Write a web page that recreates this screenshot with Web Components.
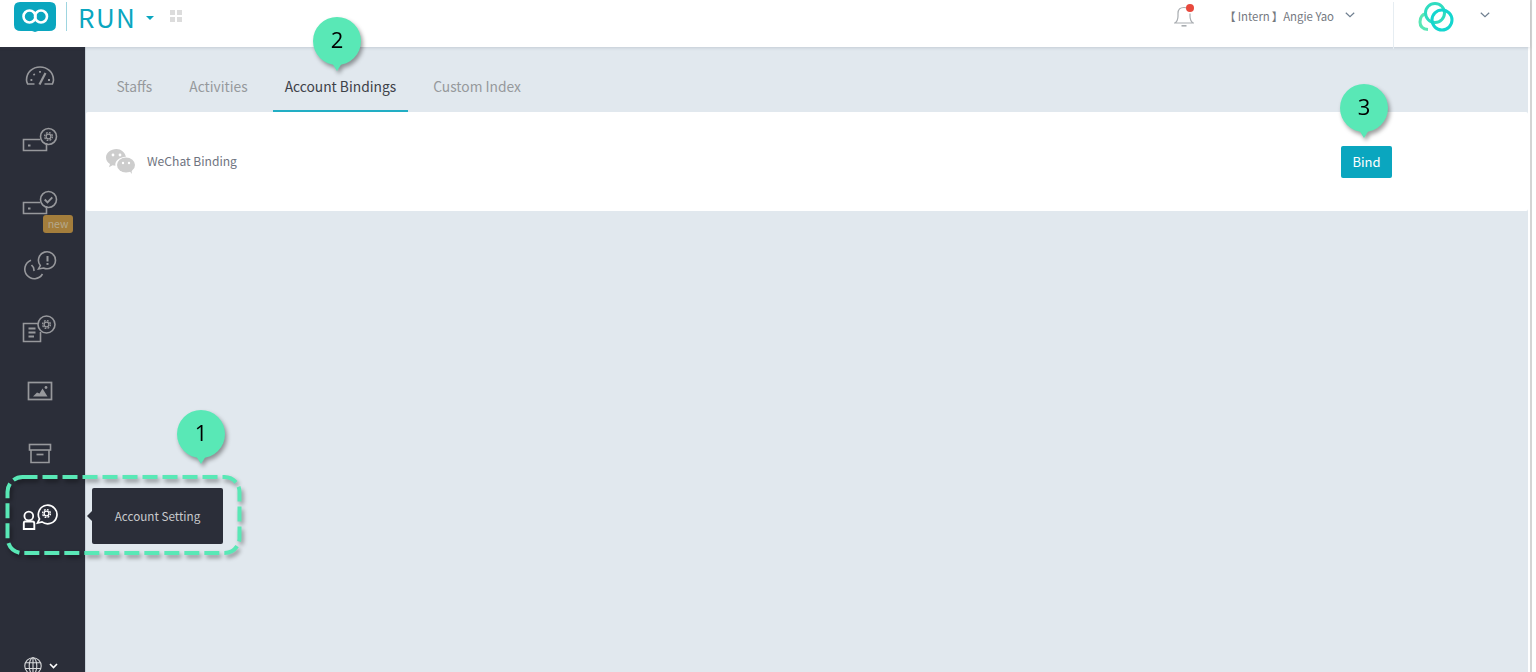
<!DOCTYPE html>
<html lang="en">
<head>
<meta charset="utf-8">
<title>Account Bindings</title>
<style>
  html, body { margin: 0; height: 100%; overflow: hidden; background: #fff; }
  body { font-family: "Noto Sans CJK SC", "Noto Sans", sans-serif; }
</style>
</head>
<body>
<app-shell>
  <app-header slot="header"></app-header>
  <side-nav slot="nav"></side-nav>
  <tab-bar slot="tabs" active="Account Bindings"></tab-bar>
  <binding-row slot="main" label="WeChat Binding" action="Bind"></binding-row>
</app-shell>
<step-frame></step-frame>
<nav-tooltip text="Account Setting"></nav-tooltip>
<step-pin n="1" style="left:177px;top:410px"></step-pin>
<step-pin n="2" style="left:313px;top:17px"></step-pin>
<step-pin n="3" style="left:1340px;top:84px"></step-pin>

<script>
class AppShell extends HTMLElement {
  constructor() {
    super();
    this.attachShadow({ mode: 'open' });
    this.shadowRoot.innerHTML = `
      <style>
        :host { display: block; height: 672px; width: 1536px; }
        .wrap { display: grid; grid-template-columns: 85px 1fr; grid-template-rows: 47px 1fr; height: 100%; width: 1530px; position: relative; }
        .top { grid-column: 1 / 3; z-index: 1; box-shadow: 0 1px 3px rgba(60,80,100,.18); }
        .content { background: #e1e8ee; border-left: 1px solid #c9d2da; box-sizing: border-box; margin-right: 2px; }
        .edge { position: fixed; top: 0; bottom: 0; left: 1530px; width: 2px; background: #d4d4d4; }
      </style>
      <div class="wrap">
        <div class="top"><slot name="header"></slot></div>
        <slot name="nav"></slot>
        <div class="content">
          <slot name="tabs"></slot>
          <slot name="main"></slot>
        </div>
      </div>
      <div class="edge"></div>
    `;
  }
}

class AppHeader extends HTMLElement {
  constructor() {
    super();
    this.attachShadow({ mode: 'open' });
    this.shadowRoot.innerHTML = `
      <style>
        :host { display: flex; align-items: stretch; height: 47px; background: #fff; }
        .brand { display: flex; align-items: center; padding-left: 14px; height: 33px; }
        .logo { width: 42px; height: 31px; display: block; }
        .rule { width: 1px; height: 29px; background: #9ed5e0; margin: 0 11px 0 10px; }
        .run { font-size: 26px; line-height: 33px; color: #0aa6bf; letter-spacing: 1.4px; font-weight: 400; }
        .caret { width: 0; height: 0; border: 4px solid transparent; border-top-color: #0aa6bf; border-bottom: 0; margin: 2px 16px 0 10px; }
        .dots { display: grid; grid-template-columns: 5px 5px; gap: 2px; margin-top: -1px; }
        .dots i { width: 5px; height: 5px; background: #dcdcdc; }
        .right { margin-left: auto; display: flex; align-items: flex-start; }
        .bell { position: relative; width: 20px; height: 27px; margin-top: 3px; }
        .bell svg { display: block; }
        .bell b { position: absolute; left: 12px; top: 1px; width: 8px; height: 8px; border-radius: 50%; background: #e8493d; }
        .user { margin-left: 30px; font-size: 11.4px; line-height: 16px; color: #75797f; margin-top: 8px; white-space: nowrap; }
        .user span { padding: 0 2px; }
        .chev { display: block; margin-top: 12px; }
        .sep { width: 1px; height: 47px; background: #e6edf2; margin-left: 38px; margin-top: 2px; }
        .mark { display: block; margin: 1px 0 0 24px; }
      </style>
      <div class="brand">
        <svg class="logo" viewBox="0 0 42 31">
          <path d="M6 1 H36 Q42 1 42 7 V24 Q42 30 35 30 H24 L21 31 L18 30 H7 Q0 30 0 24 V7 Q0 1 6 1 Z" fill="#0aa6bf"/>
          <g fill="none" stroke="#fff" stroke-width="2.6">
            <circle cx="15.5" cy="15.5" r="6"/>
            <circle cx="27" cy="15.5" r="6"/>
          </g>
        </svg>
        <span class="rule"></span>
        <span class="run">RUN</span>
        <span class="caret"></span>
        <span class="dots"><i></i><i></i><i></i><i></i></span>
      </div>
      <div class="right">
        <div class="bell">
          <svg width="20" height="27" viewBox="0 0 20 27" fill="none" stroke="#a9adb1" stroke-width="1.2">
            <path d="M13.5 5.3 Q12 4.5 10 4.5 Q4 4.5 4 10.5 V13 Q4 18 .8 20 H19.2 Q16 18 16 13 V10.5"/>
            <path d="M7.5 22.8 H12.5" stroke-width="1.6"/>
          </svg>
          <b></b>
        </div>
        <span class="user">【<span>Intern</span>】Angie Yao</span>
        <svg class="chev" style="margin-left:11px" width="10" height="6" viewBox="0 0 10 6" fill="none" stroke="#6f7f90" stroke-width="1.2"><path d="M.8 .8 5 4.6 9.2 .8"/></svg>
        <span class="sep"></span>
        <svg class="mark" width="38" height="32" viewBox="0 0 38 32" fill="none" stroke-width="3">
          <path d="M10 28.5 Q2 28 2 21 Q2 14 8 12.5" stroke="#59e6b4"/>
          <circle cx="17" cy="12" r="9.5" stroke="#2fdcc0"/>
          <circle cx="24" cy="19" r="10" stroke="#14d6cf"/>
        </svg>
        <svg class="chev" style="margin-left:24px;margin-right:40px" width="10" height="6" viewBox="0 0 10 6" fill="none" stroke="#6f7f90" stroke-width="1.2"><path d="M.8 .8 5 4.6 9.2 .8"/></svg>
      </div>
    `;
  }
}

// gear: ring plus a toothed ring round it, inside a speech circle
const gear = (cx, cy) => `
  <circle cx="${cx}" cy="${cy}" r="2.4" stroke-width="1.3"/>
  <circle cx="${cx}" cy="${cy}" r="3.9" stroke-width="1.4" stroke-dasharray="1.8 1.26"/>`;

const server = `<path d="M24.5 25 V32.5 H1.5 V21.5 H18"/><path d="M6 27.5 h2.5" stroke-width="2"/>`;

// sidebar glyphs, 42x42 box, drawn in currentColor
const NAV_ICONS = {
  gauge: `<path d="M5 29 H12.5 M22.5 29 H31 M5.6 29 Q4.5 26.5 4.5 25 C4.5 17.5 10.5 12 18 12 S31.5 17.5 31.5 25 Q31.5 26.5 30.4 29"/>
    <path d="M17.5 29.5 L23.5 18" stroke-width="2.2"/>
    <path d="M8.5 25 h1.8 M11.5 19 l1.2 1.2 M18 16 v1.8 M28 25 h-2" stroke-width="1.8"/>`,
  serverGear: `${server}<circle cx="26.5" cy="18.5" r="8"/>${gear(26.5, 18.5)}`,
  serverCheck: `${server}<circle cx="26.5" cy="18.5" r="8"/><path d="M22.7 18.5 l2.8 2.8 4.8-5" stroke-width="1.9"/>`,
  clockAlert: `<path d="M20.5 30 A9.5 9.5 0 1 1 9 16.3"/><path d="M9.5 21 l2 2.5 .6 3.5" stroke-width="1.6"/>
    <path d="M18.3 21.5 A8.5 8.5 0 1 1 21.5 24 L16.5 25 Z"/>
    <path d="M25.5 12 v5.5" stroke-width="2"/><path d="M25.5 19 v1.9" stroke-width="2"/>`,
  docGear: `<path d="M18.5 25 V34.5 H1.5 V16.5 H16"/><path d="M6.5 21.5 h7 M6.5 25.5 h7 M6.5 29.5 h5.5" stroke-width="1.9"/>
    <circle cx="24.5" cy="17.5" r="8.5"/>${gear(24.5, 17.5)}`,
  picture: `<rect x="6.5" y="12.5" width="23" height="17" stroke-width="1.7"/>
    <path d="M11 26.5 L15 22.5 L17.5 23.5 L20.5 18.5 L25.5 26.5 Z" fill="currentColor" stroke="none"/>
    <circle cx="24" cy="17.5" r="1.4" fill="currentColor" stroke="none"/>`,
  archive: `<rect x="7.5" y="11.5" width="21" height="5.5"/><path d="M9 17 V29.5 H27 V17"/><path d="M14.5 21.5 h7" stroke-width="1.7"/>`,
  userGear: `<circle cx="6.8" cy="20" r="4.4" stroke-width="1.8"/>
    <path d="M3 25.5 H10.5 Q12.3 25.5 12.3 27.5 V33 H1.8 V27.5 Q1.8 25.5 3 25.5 Z" stroke-width="1.9"/>
    <path d="M17.5 23 A9.3 9.3 0 1 1 20 25.9 L15.5 27 Z" stroke-width="1.7"/>${gear(24.5, 17.5)}`
};

class NavIcon extends HTMLElement {
  constructor() {
    super();
    this.attachShadow({ mode: 'open' });
  }

  connectedCallback() {
    const name = this.getAttribute('name');
    const on = this.hasAttribute('active');
    this.shadowRoot.innerHTML = `
      <style>
        :host { display: flex; justify-content: center; align-items: center; height: 63px; position: relative; color: ${on ? '#fff' : '#97989c'}; }
        svg { display: block; width: 42px; height: 42px; fill: none; stroke: currentColor; stroke-width: 1.6; }
      </style>
      <svg viewBox="0 0 42 42">${NAV_ICONS[name]}</svg>
    `;
  }
}

class SideNav extends HTMLElement {
  constructor() {
    super();
    this.attachShadow({ mode: 'open' });
    this.shadowRoot.innerHTML = `
      <style>
        :host { display: flex; flex-direction: column; background: #2b2e39; height: 625px; position: relative; }
        .new { position: absolute; left: 43px; top: 168px; width: 30px; height: 18px; border-radius: 3px; background: #a47e3c; color: #b5a98c; font-size: 10.5px; line-height: 17px; text-align: center; }
        nav-icon:nth-of-type(1) { margin-top: -2px; height: 62px; }
        .lang { position: absolute; left: 24px; top: 610px; display: flex; align-items: center; gap: 7px; color: #d8d9db; }
        .lang svg { display: block; }
      </style>
      <nav-icon name="gauge"></nav-icon>
      <nav-icon name="serverGear"></nav-icon>
      <nav-icon name="serverCheck"></nav-icon>
      <nav-icon name="clockAlert"></nav-icon>
      <nav-icon name="docGear"></nav-icon>
      <nav-icon name="picture"></nav-icon>
      <nav-icon name="archive"></nav-icon>
      <nav-icon name="userGear" active></nav-icon>
      <span class="new">new</span>
      <div class="lang">
        <svg width="18" height="18" viewBox="0 0 18 18" fill="none" stroke="currentColor" stroke-width="1.1">
          <circle cx="9" cy="9" r="8.2"/><ellipse cx="9" cy="9" rx="3.8" ry="8.2"/>
          <path d="M9 .8 V17.2 M1.5 5.8 H16.5 M1 11.5 H17"/>
        </svg>
        <svg width="9" height="6" viewBox="0 0 9 6" fill="none" stroke="#fff" stroke-width="1.6"><path d="M1 1 4.5 4.5 8 1"/></svg>
      </div>
    `;
  }
}

class TabBar extends HTMLElement {
  constructor() {
    super();
    this.attachShadow({ mode: 'open' });
  }

  connectedCallback() {
    const active = this.getAttribute('active');
    const tabs = ['Staffs', 'Activities', 'Account Bindings', 'Custom Index'];
    this.shadowRoot.innerHTML = `
      <style>
        :host { display: flex; height: 65px; padding-left: 18.5px; box-sizing: border-box; font-size: 13.8px; }
        .tab { height: 65px; box-sizing: border-box; padding: 28px 12px 0; line-height: 22px; margin-right: 13px; color: #96999c; white-space: nowrap; }
        .tab.on { color: #3d4148; border-bottom: 2px solid #22aec4; }
      </style>
      ${tabs.map((t) => `<div class="tab ${t === active ? 'on' : ''}">${t}</div>`).join('')}
    `;
  }
}

class BindingRow extends HTMLElement {
  constructor() {
    super();
    this.attachShadow({ mode: 'open' });
  }

  connectedCallback() {
    this.shadowRoot.innerHTML = `
      <style>
        :host { display: flex; align-items: center; height: 99px; background: #fff; padding: 0 136px 0 20px; box-sizing: border-box; border-radius: 2px; }
        svg { display: block; margin-right: 12px; }
        .label { font-size: 12.1px; color: #6f7480; margin-top: -2px; }
        button { margin-left: auto; width: 51px; height: 32px; border: 0; border-radius: 2px; background: #0aa6bf; color: #fff; font: inherit; font-size: 13px; padding: 0; }
      </style>
      <svg width="29" height="25" viewBox="0 0 29 25" fill="#cdcdcd">
        <path d="M10.5 0 C4.7 0 0 3.8 0 8.5 C0 11.2 1.6 13.5 4 15 L3 18.2 L6.6 16.3 C7.5 16.6 8.4 16.7 9.4 16.8 C8.6 12 13 8.2 19.9 7.7 C18.8 3.2 15 0 10.5 0 Z"/>
        <ellipse cx="20" cy="16" rx="9" ry="7.5"/>
        <path d="M23.5 22 L26 25 L25.5 20.5 Z"/>
        <circle cx="7" cy="6" r="1.4" fill="#fff"/><circle cx="14" cy="6" r="1.4" fill="#fff"/>
        <circle cx="17" cy="14" r="1.2" fill="#fff"/><circle cx="23" cy="14" r="1.2" fill="#fff"/>
      </svg>
      <span class="label">${this.getAttribute('label')}</span>
      <button>${this.getAttribute('action')}</button>
    `;
  }
}

class NavTooltip extends HTMLElement {
  constructor() {
    super();
    this.attachShadow({ mode: 'open' });
  }

  connectedCallback() {
    this.shadowRoot.innerHTML = `
      <style>
        :host { position: absolute; z-index: 2; left: 92px; top: 488px; width: 131px; height: 56px; padding-bottom: 2px; box-sizing: border-box; display: flex; align-items: center; justify-content: center; background: #2b2e39; border-radius: 2px; color: #c9cacd; font-size: 11.7px; }
        :host::before { content: ""; position: absolute; left: -5px; top: 23px; border: 5px solid transparent; border-left: 0; border-right-color: #2b2e39; }
      </style>
      ${this.getAttribute('text')}
    `;
  }
}

class StepFrame extends HTMLElement {
  constructor() {
    super();
    this.attachShadow({ mode: 'open' });
    this.shadowRoot.innerHTML = `
      <style>
        :host { position: absolute; z-index: 2; left: 5px; top: 475px; width: 240px; height: 81px; display: block; filter: drop-shadow(2px 3px 2px rgba(0,0,0,.38)); }
        svg { display: block; overflow: visible; }
      </style>
      <svg width="240" height="81" fill="none">
        <rect x="2.5" y="2" width="232" height="76" rx="15" stroke="#59e8b6" stroke-width="4" stroke-dasharray="15 5"/>
      </svg>
    `;
  }
}

class StepPin extends HTMLElement {
  constructor() {
    super();
    this.attachShadow({ mode: 'open' });
  }

  connectedCallback() {
    this.shadowRoot.innerHTML = `
      <style>
        :host { position: absolute; z-index: 3; width: 48px; height: 55px; display: block; filter: drop-shadow(2px 3px 2px rgba(0,0,0,.38)); }
        .dot { width: 48px; height: 48px; border-radius: 50%; background: #59e8b6; color: #000; display: flex; align-items: center; justify-content: center; font: 22px/1 "Open Sans", sans-serif; padding-bottom: 4px; box-sizing: border-box; }
        .tip { width: 0; height: 0; margin: -2px auto 0; border: 5px solid transparent; border-top: 8px solid #59e8b6; border-bottom: 0; }
      </style>
      <div class="dot">${this.getAttribute('n')}</div>
      <div class="tip"></div>
    `;
  }
}

customElements.define('app-shell', AppShell);
customElements.define('app-header', AppHeader);
customElements.define('nav-icon', NavIcon);
customElements.define('side-nav', SideNav);
customElements.define('tab-bar', TabBar);
customElements.define('binding-row', BindingRow);
customElements.define('nav-tooltip', NavTooltip);
customElements.define('step-frame', StepFrame);
customElements.define('step-pin', StepPin);
</script>
</body>
</html>
